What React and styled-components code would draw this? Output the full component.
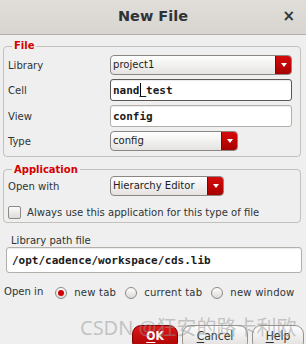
import React from 'react';
import styled, { createGlobalStyle } from 'styled-components';

const GlobalStyle = createGlobalStyle`
  * { box-sizing: border-box; }
  html, body { margin: 0; padding: 0; background: #efefef; }
  body {
    font-family: 'DejaVu Sans Condensed', 'Liberation Sans', sans-serif;
    font-size: 11.2px;
    color: #2e3436;
  }
`;

const StyledWindow = styled.div`
  position: relative;
  width: 306px;
  height: 344px;
  overflow: hidden;
  background: #efefef;
  display: flex;
  flex-direction: column;
  & > * { flex-shrink: 0; }
`;

const StyledTitleBar = styled.div`
  position: relative;
  height: 35px;
  display: flex;
  align-items: center;
  justify-content: center;
  background: linear-gradient(#e1ddd9, #d8d4cf);
  border-bottom: 1px solid #b6b0a9;
`;

const StyledTitle = styled.span`
  font-family: 'DejaVu Sans', sans-serif;
  font-weight: bold;
  font-size: 14.5px;
  color: #2e3436;
  margin-top: -2px;
`;

const StyledClose = styled.span`
  position: absolute;
  right: 11px;
  top: 7px;
  font-family: 'DejaVu Sans', sans-serif;
  font-weight: bold;
  font-size: 15px;
  color: #2e3436;
`;

const StyledGroup = styled.fieldset`
  margin: ${(p) => p.$top}px 5px 0 3px;
  padding: ${(p) => p.$padTop}px 8px ${(p) => p.$padBottom}px 4px;
  border: 1px solid #c3c0bc;
  border-radius: 4px;
  display: flex;
  flex-direction: column;
  gap: ${(p) => p.$gap}px;
  min-width: 0;
  legend {
    padding: 0 2px;
    margin-left: 4px;
    color: #d40000;
    font-family: 'DejaVu Sans', sans-serif;
    font-weight: bold;
    font-size: 10px;
    line-height: ${(p) => p.$legend}px;
  }
`;

const StyledRow = styled.div`
  display: grid;
  grid-template-columns: 102px 1fr;
  align-items: center;
  height: ${(p) => p.$h}px;
`;

const StyledLabel = styled.span`
  white-space: nowrap;
`;

const StyledCombo = styled.div`
  display: flex;
  align-items: stretch;
  width: ${(p) => p.$w || '100%'};
  height: 20px;
  border: 1px solid #8b8681;
  border-radius: 4px;
  overflow: hidden;
  background: linear-gradient(#fefefe, #e4e3e1);
  span {
    flex: 1;
    padding-left: 2px;
    line-height: 18px;
    color: #1e1e1e;
    white-space: nowrap;
  }
`;

const StyledArrow = styled.div`
  width: 16px;
  flex: none;
  display: flex;
  align-items: center;
  justify-content: center;
  background: linear-gradient(#d60a0a, #a80000);
  border-left: 1px solid #8a0000;
  &::after {
    content: '';
    border-left: 3.5px solid transparent;
    border-right: 3.5px solid transparent;
    border-top: 4px solid #fff;
  }
`;

const StyledInput = styled.div`
  height: ${(p) => p.$h || 22}px;
  border: 1px solid ${(p) => (p.$focus ? '#5c5955' : '#b3afaa')};
  border-radius: 3px;
  background: #fff;
  box-shadow: inset 0 1px 1px rgba(0, 0, 0, 0.08);
  display: flex;
  align-items: center;
  padding-left: ${(p) => p.$pad || 2}px;
  font-family: 'DejaVu Sans Mono', monospace;
  font-weight: bold;
  font-size: 11px;
  color: #1a1a1a;
  white-space: nowrap;
  margin: ${(p) => p.$margin || 0};
`;

const StyledCaret = styled.i`
  display: inline-block;
  width: 1px;
  height: 14px;
  background: #000;
  margin: 0 -1px 0 0;
`;

const StyledCheckRow = styled.label`
  display: flex;
  align-items: center;
  gap: 6px;
  height: 18px;
  white-space: nowrap;
`;

const StyledCheckbox = styled.span`
  width: 13px;
  height: 13px;
  flex: none;
  border: 1px solid #8d8984;
  border-radius: 2px;
  background: linear-gradient(#fbfbfb, #dedcda);
`;

const StyledPathLabel = styled.div`
  margin: 12px 0 0 11px;
  line-height: 12px;
  height: 12px;
`;

const StyledOpenRow = styled.div`
  display: flex;
  align-items: center;
  height: 16px;
  margin: 10px 0 0 4px;
  white-space: nowrap;
`;

const StyledRadioOption = styled.label`
  display: flex;
  align-items: center;
  gap: ${(p) => p.$inner}px;
  margin-left: ${(p) => p.$gap}px;
  margin-top: 3px;
  letter-spacing: 0.2px;
`;

const StyledRadio = styled.span`
  width: 12px;
  height: 12px;
  border-radius: 50%;
  border: 1px solid #8d8984;
  background: linear-gradient(#fdfdfd, #dcdad8);
  display: flex;
  align-items: center;
  justify-content: center;
  &::after {
    content: '';
    display: ${(p) => (p.$checked ? 'block' : 'none')};
    width: 6px;
    height: 6px;
    border-radius: 50%;
    background: #d00000;
  }
`;

const StyledButtons = styled.div`
  display: flex;
  justify-content: flex-end;
  gap: 4px;
  margin: 26px 2px 0 0;
`;

const StyledButton = styled.button`
  width: ${(p) => p.$w}px;
  height: 26px;
  flex: none;
  border-radius: 9px;
  font-family: 'DejaVu Sans Condensed', 'Liberation Sans', sans-serif;
  font-size: 12px;
  padding: 0 0 4px;
  border: 1px solid ${(p) => (p.$primary ? '#7c0000' : '#97928d')};
  background: ${(p) =>
    p.$primary
      ? 'linear-gradient(#de1818, #a50000)'
      : 'linear-gradient(#fdfdfd, #dddbd8)'};
  color: ${(p) => (p.$primary ? '#fff' : '#2e3436')};
  font-weight: ${(p) => (p.$primary ? 'bold' : 'normal')};
  u { text-decoration-thickness: 1px; text-underline-offset: 2px; }
`;

const StyledWatermark = styled.div`
  position: absolute;
  left: 80px;
  top: 312px;
  font-family: 'Noto Sans', 'Noto Sans CJK SC', sans-serif;
  font-size: 20px;
  color: rgba(150, 150, 150, 0.5);
  white-space: nowrap;
  pointer-events: none;
`;

const Combo = ({ value, width }) => (
  <StyledCombo $w={width}>
    <span>{value}</span>
    <StyledArrow />
  </StyledCombo>
);

const App = () => {
  return (
    <StyledWindow>
      <GlobalStyle />
      <StyledTitleBar>
        <StyledTitle>New File</StyledTitle>
        <StyledClose>×</StyledClose>
      </StyledTitleBar>

      <StyledGroup $top={4} $padTop={2} $padBottom={5} $gap={4} $legend={14}>
        <legend>File</legend>
        <StyledRow $h={20}>
          <StyledLabel>Library</StyledLabel>
          <Combo value='project1' />
        </StyledRow>
        <StyledRow $h={22}>
          <StyledLabel>Cell</StyledLabel>
          <StyledInput $focus>
            nand<StyledCaret />_test
          </StyledInput>
        </StyledRow>
        <StyledRow $h={22}>
          <StyledLabel>View</StyledLabel>
          <StyledInput>config</StyledInput>
        </StyledRow>
        <StyledRow $h={20}>
          <StyledLabel>Type</StyledLabel>
          <Combo value='config' width='128px' />
        </StyledRow>
      </StyledGroup>

      <StyledGroup $top={6} $padTop={0} $padBottom={1} $gap={7} $legend={13}>
        <legend>Application</legend>
        <StyledRow $h={20}>
          <StyledLabel>Open with</StyledLabel>
          <Combo value='Hierarchy Editor' width='114px' />
        </StyledRow>
        <StyledCheckRow>
          <StyledCheckbox />
          Always use this application for this type of file
        </StyledCheckRow>
      </StyledGroup>

      <StyledPathLabel>Library path file</StyledPathLabel>
      <StyledInput $h={26} $pad={5} $margin='0 4px 0 6px'>
        /opt/cadence/workspace/cds.lib
      </StyledInput>

      <StyledOpenRow>
        Open in
        <StyledRadioOption $gap={12} $inner={7}>
          <StyledRadio $checked />
          new tab
        </StyledRadioOption>
        <StyledRadioOption $gap={9} $inner={7}>
          <StyledRadio />
          current tab
        </StyledRadioOption>
        <StyledRadioOption $gap={9} $inner={7}>
          <StyledRadio />
          new window
        </StyledRadioOption>
      </StyledOpenRow>

      <StyledButtons>
        <StyledButton $primary $w={46}>
          <u>O</u>K
        </StyledButton>
        <StyledButton $w={66}>
          <u>C</u>ancel
        </StyledButton>
        <StyledButton $w={52}>
          <u>H</u>elp
        </StyledButton>
      </StyledButtons>

      <StyledWatermark>CSDN @狂安的路卡利欧</StyledWatermark>
    </StyledWindow>
  );
};

export default App;
